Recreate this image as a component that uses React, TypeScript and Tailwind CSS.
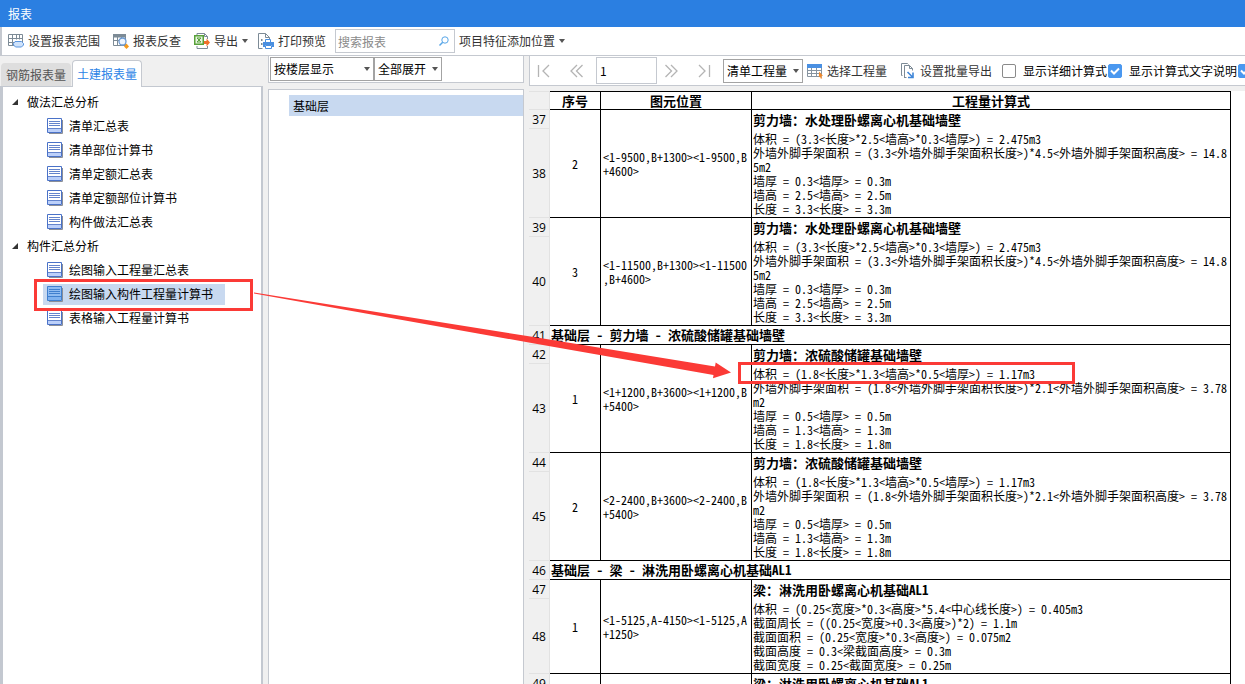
import type { ReactNode } from 'react';

const treeGroups = [
  {
    title: '做法汇总分析',
    items: ['清单汇总表', '清单部位计算书', '清单定额汇总表', '清单定额部位计算书', '构件做法汇总表'],
  },
  {
    title: '构件汇总分析',
    items: ['绘图输入工程量汇总表', '绘图输入构件工程量计算书', '表格输入工程量计算书'],
  },
];

const activeReport = '绘图输入构件工程量计算书';

type Entry = {
  section?: string;
  row: number;
  no: string;
  position: string[];
  title: string;
  lines: string[];
};

const entries: Entry[] = [
  {
    row: 37,
    no: '2',
    position: ['<1-9500,B+1300><1-9500,B', '+4600>'],
    title: '剪力墙：水处理卧螺离心机基础墙壁',
    lines: [
      '体积 = (3.3<长度>*2.5<墙高>*0.3<墙厚>) = 2.475m3',
      '外墙外脚手架面积 = (3.3<外墙外脚手架面积长度>)*4.5<外墙外脚手架面积高度> = 14.8',
      '5m2',
      '墙厚 = 0.3<墙厚> = 0.3m',
      '墙高 = 2.5<墙高> = 2.5m',
      '长度 = 3.3<长度> = 3.3m',
    ],
  },
  {
    row: 39,
    no: '3',
    position: ['<1-11500,B+1300><1-11500', ',B+4600>'],
    title: '剪力墙：水处理卧螺离心机基础墙壁',
    lines: [
      '体积 = (3.3<长度>*2.5<墙高>*0.3<墙厚>) = 2.475m3',
      '外墙外脚手架面积 = (3.3<外墙外脚手架面积长度>)*4.5<外墙外脚手架面积高度> = 14.8',
      '5m2',
      '墙厚 = 0.3<墙厚> = 0.3m',
      '墙高 = 2.5<墙高> = 2.5m',
      '长度 = 3.3<长度> = 3.3m',
    ],
  },
  {
    section: '基础层 - 剪力墙 - 浓硫酸储罐基础墙壁',
    row: 42,
    no: '1',
    position: ['<1+1200,B+3600><1+1200,B', '+5400>'],
    title: '剪力墙：浓硫酸储罐基础墙壁',
    lines: [
      '体积 = (1.8<长度>*1.3<墙高>*0.5<墙厚>) = 1.17m3',
      '外墙外脚手架面积 = (1.8<外墙外脚手架面积长度>)*2.1<外墙外脚手架面积高度> = 3.78',
      'm2',
      '墙厚 = 0.5<墙厚> = 0.5m',
      '墙高 = 1.3<墙高> = 1.3m',
      '长度 = 1.8<长度> = 1.8m',
    ],
  },
  {
    row: 44,
    no: '2',
    position: ['<2-2400,B+3600><2-2400,B', '+5400>'],
    title: '剪力墙：浓硫酸储罐基础墙壁',
    lines: [
      '体积 = (1.8<长度>*1.3<墙高>*0.5<墙厚>) = 1.17m3',
      '外墙外脚手架面积 = (1.8<外墙外脚手架面积长度>)*2.1<外墙外脚手架面积高度> = 3.78',
      'm2',
      '墙厚 = 0.5<墙厚> = 0.5m',
      '墙高 = 1.3<墙高> = 1.3m',
      '长度 = 1.8<长度> = 1.8m',
    ],
  },
  {
    section: '基础层 - 梁 - 淋洗用卧螺离心机基础AL1',
    row: 47,
    no: '1',
    position: ['<1-5125,A-4150><1-5125,A', '+1250>'],
    title: '梁：淋洗用卧螺离心机基础AL1',
    lines: [
      '体积 = (0.25<宽度>*0.3<高度>*5.4<中心线长度>) = 0.405m3',
      '截面周长 = ((0.25<宽度>+0.3<高度>)*2) = 1.1m',
      '截面面积 = (0.25<宽度>*0.3<高度>) = 0.075m2',
      '截面高度 = 0.3<梁截面高度> = 0.3m',
      '截面宽度 = 0.25<截面宽度> = 0.25m',
    ],
  },
  {
    row: 49,
    no: '',
    position: [],
    title: '梁：淋洗用卧螺离心机基础AL1',
    lines: [],
  },
];

function Caret() {
  return (
    <svg className="w-[6px] h-1 shrink-0" viewBox="0 0 6 4">
      <path d="M0 0h6L3 4z" fill="#555" />
    </svg>
  );
}

function RangeIcon() {
  return (
    <svg className="w-4 h-4 shrink-0" viewBox="0 0 16 16" fill="none">
      <path d="M.5 1.5h14v11H.5zM.5 5.5h14M.5 9.5h7M4.5 1.5v11M8.5 1.5v5M11.5 1.5v5" stroke="#7d8b96" />
      <path d="M7 8.500h6.500l2 2v1.500l-2 2H7.500l-2-2v-1.500z" fill="#cfe2fa" stroke="#5b96df" />
    </svg>
  );
}

function TraceIcon() {
  return (
    <svg className="w-4 h-4 shrink-0" viewBox="0 0 16 16" fill="none">
      <path d="M.5 1.500h12v11H.5zM.5 7.500h6M.5 4h12M4.500 4v9M8.500 4v2" stroke="#7d8b96" />
      <path d="M0 1h13v3H0z" fill="#7d8b96" />
      <circle cx="9.500" cy="8.500" r="3.500" fill="#eef5fd" stroke="#6d9bd4" strokeWidth="1.300" />
      <path d="M13.500 10.500L16 13.500l-2.500 2.500L11 13.500z" fill="#f59a1c" />
    </svg>
  );
}

function ExportIcon() {
  return (
    <svg className="w-4 h-4 shrink-0" viewBox="0 0 16 16" fill="none">
      <path d="M3 2V.500h7.500l3 3V6M3 13v2.500h10.500V13" stroke="#7d8b96" />
      <path d="M10.500.5v3h3" stroke="#7d8b96" />
      <rect x=".75" y="2.750" width="8.500" height="8.500" fill="#e6f4e0" stroke="#58a13a" strokeWidth="1.500" />
      <path d="M3 5l4 4M7 5L3 9M3 5h4M3 9h4" stroke="#58a13a" />
      <path d="M10 8h2.500V5.500L16 9.500l-3.500 4V11H10z" fill="#f0702a" />
    </svg>
  );
}

function PrintIcon() {
  return (
    <svg className="w-4 h-4 shrink-0" viewBox="0 0 16 16" fill="none">
      <path d="M4.500 15.500H.5V.500h7l4 4V6M7.500.5v4h4" stroke="#7d8b96" />
      <path d="M3 6h1.500v2H3zM3 10h1.500v2H3z" fill="#7d8b96" />
      <path d="M7.500 6.500h5v3h-5z" fill="#fff" stroke="#4a8fe0" />
      <path d="M5 9h11v5h-2v-2H7v2H5z" fill="#4a8fe0" />
      <path d="M7.500 12.500h6v3h-6z" fill="#fff" stroke="#4a8fe0" />
    </svg>
  );
}

function SelectTableIcon() {
  return (
    <svg className="w-4 h-4 shrink-0" viewBox="0 0 16 16" fill="none">
      <path d="M.5 4.500h14v9H.5zM.5 7.500h14M.5 10.500h14M4.500 4v10M9.500 4v10" stroke="#8794a0" />
      <path d="M0 1h15v4H0z" fill="#4a90e2" />
      <path d="M12 8.500l4 4.200-1.800.3 1 2.300-1.300.5-1-2.300-1 1z" fill="#f08a2c" />
    </svg>
  );
}

function BatchIcon() {
  return (
    <svg className="w-4 h-4 shrink-0" viewBox="0 0 16 16" fill="none">
      <path d="M2.500 12.500h-1V.500h6l1 1M4.500 15V2.500h5l3 3v2M9.500 2.500v3h3M4.500 14.500h2" stroke="#7d8b96" />
      <path d="M7.500 9l5 5M13 9.500v5H8" stroke="#3f86d8" strokeWidth="1.600" />
    </svg>
  );
}

function ReportIcon({ active }: { active?: boolean }) {
  return (
    <svg className="w-4 h-4 shrink-0" viewBox="0 0 16 16" fill="none">
      <path d="M2 15.500h13.500V2" stroke="#8b8f98" />
      <path d="M.5.500h14v14H.5z" fill={active ? '#8fbcf2' : '#fff'} stroke={active ? '#3f7fcf' : '#4a72c8'} />
      <path d="M1 11h13v3H1z" fill={active ? '#7fb2f0' : '#bcd0fa'} />
      <path d="M2 3.500h11M2 5.500h11M2 7.500h11M1 10.500h13" stroke={active ? '#3f7fcf' : '#6484cc'} />
    </svg>
  );
}

function NavButton({ label, d }: { label: string; d: string }) {
  return (
    <button aria-label={label} className="w-7 h-6 flex items-center justify-center">
      <svg className="w-[14px] h-[14px]" viewBox="0 0 14 14" fill="none" stroke="#b4b4b4" strokeWidth="1.300">
        <path d={d} />
      </svg>
    </button>
  );
}

function ToolButton({ icon, children }: { icon?: ReactNode; children: ReactNode }) {
  return (
    <button className="h-6 pl-1 pr-[5px] flex items-center gap-1 text-[#333] whitespace-nowrap shrink-0">
      {icon}
      {children}
    </button>
  );
}

function MenuButton({ icon, children }: { icon?: ReactNode; children: ReactNode }) {
  return (
    <button className="h-6 pr-[2px] flex items-center gap-1 text-[#333] whitespace-nowrap shrink-0">
      {icon}
      {children}
      <Caret />
    </button>
  );
}

function Dropdown({ label, value, width }: { label: string; value: string; width: string }) {
  return (
    <div className={`relative h-6 shrink-0 ${width}`}>
      <select aria-label={label} className="appearance-none w-full h-full pl-[3px] bg-white border border-[#a3a3a3] text-black">
        <option>{value}</option>
      </select>
      <span className="absolute right-1 inset-y-0 flex items-center pointer-events-none">
        <Caret />
      </span>
    </div>
  );
}

function Check({ label, checked }: { label: string; checked?: boolean }) {
  return (
    <label className="flex items-center gap-[7px] whitespace-nowrap shrink-0 text-black">
      <span className="relative w-[14px] h-[14px] shrink-0">
        <input
          type="checkbox"
          defaultChecked={checked}
          className="peer block appearance-none w-[14px] h-[14px] rounded-[2px] border border-[#8a8a8a] bg-white checked:bg-[#4a98f0] checked:border-[#4a98f0]"
        />
        <svg className="absolute inset-0 hidden peer-checked:block pointer-events-none" viewBox="0 0 14 14" fill="none">
          <path d="M3 6.500l3 3L11 4.500" stroke="#fff" strokeWidth="2" />
        </svg>
      </span>
      {label}
    </label>
  );
}

function RowNumber({ children }: { children?: ReactNode }) {
  return (
    <th scope="row" className="pt-[2px] bg-[#f0f0f0] border-b border-r border-[#e2e2e2] font-normal text-center font-['Open_Sans','Noto_Sans_CJK_SC',sans-serif]">
      {children}
    </th>
  );
}

function EntryRows({ entry }: { entry: Entry }) {
  return (
    <>
      {entry.section && (
        <tr className="h-[19px]">
          <RowNumber>{entry.row - 1}</RowNumber>
          <td colSpan={3} className="border-b border-r border-black pl-px text-[13px] leading-[18px] font-bold whitespace-pre">
            {entry.section}
          </td>
        </tr>
      )}
      <tr className="h-[19px]">
        <RowNumber>{entry.row}</RowNumber>
        <td rowSpan={2} className="border-b border-r border-black text-center">
          {entry.no}
        </td>
        <td rowSpan={2} className="border-b border-r border-black pl-[2px] whitespace-pre">
          {entry.position.map((line) => (
            <div key={line}>{line}</div>
          ))}
        </td>
        <td className="border-r border-black pl-px text-[13px] leading-[19px] font-bold whitespace-pre">{entry.title}</td>
      </tr>
      <tr>
        <RowNumber>{entry.row + 1}</RowNumber>
        <td className="border-b border-r border-black pl-px pt-[3px] pb-px whitespace-pre">
          {entry.lines.map((line) => (
            <div key={line}>{line}</div>
          ))}
        </td>
      </tr>
    </>
  );
}

function ReportTable() {
  return (
    <table className="table-fixed border-separate border-spacing-0 w-[702px] text-[12px] leading-[14px] text-black font-['Noto_Sans_Mono_CJK_SC','Noto_Sans_CJK_SC',monospace]">
      <colgroup>
        <col className="w-[21px]" />
        <col className="w-[51px]" />
        <col className="w-[151px]" />
        <col />
      </colgroup>
      <thead>
        <tr className="h-[19px] text-[13px] leading-[17px]">
          <td className="bg-[#f0f0f0] border-b border-r border-t border-[#e2e2e2]" />
          <th className="border-t border-b border-r border-black">序号</th>
          <th className="border-t border-b border-r border-black">图元位置</th>
          <th className="border-t border-b border-r border-black">工程量计算式</th>
        </tr>
      </thead>
      <tbody>
        {entries.map((entry) => (
          <EntryRows key={entry.row} entry={entry} />
        ))}
      </tbody>
    </table>
  );
}

function Annotations() {
  return (
    <div className="absolute inset-0 overflow-hidden pointer-events-none">
      <div className="absolute left-[34px] top-[279px] w-[219px] h-8 border-3 border-[#fb3a36]" />
      <div className="absolute left-[738px] top-[362px] w-[337px] h-[22px] border-3 border-[#fb3a36]" />
      <svg className="absolute left-0 top-0 w-[760px] h-[400px]" viewBox="0 0 760 400">
        <path d="M254 292.500L540 338L715 366.500L715.700 362.500L731 372.500L713 378.300L713.500 375L540 344.500L254 293.500Z" fill="#fb3a36" />
      </svg>
    </div>
  );
}

export default function App() {
  return (
    <div className="relative h-screen flex flex-col overflow-hidden bg-[#f0f0f0] text-[12px] leading-4 font-['Noto_Sans_CJK_SC',sans-serif]">
      <header className="h-[27px] shrink-0 px-2 flex items-center bg-[#2b7fe1] text-white">报表</header>

      <div className="h-[29px] shrink-0 pl-[2px] flex items-center gap-1 bg-white border-b border-l-2 border-[#c5c9d0]">
        <ToolButton icon={<RangeIcon />}>设置报表范围</ToolButton>
        <ToolButton icon={<TraceIcon />}>报表反查</ToolButton>
        <div className="pl-1">
          <MenuButton icon={<ExportIcon />}>导出</MenuButton>
        </div>
        <ToolButton icon={<PrintIcon />}>打印预览</ToolButton>
        <div className="relative w-[120px] shrink-0">
          <input
            aria-label="搜索报表"
            placeholder="搜索报表"
            className="w-full h-6 pl-[2px] border border-[#c5c9d0] bg-white placeholder:text-[#8a8a8a]"
          />
          <svg className="absolute right-1 top-[6px] w-[14px] h-3" viewBox="0 0 14 12" fill="none" stroke="#58a6e8">
            <circle cx="8" cy="5" r="3.200" />
            <path d="M5.700 7.300L2.500 10.500" strokeWidth="1.500" />
          </svg>
        </div>
        <MenuButton>项目特征添加位置</MenuButton>
      </div>

      <main className="flex-1 min-h-0 flex gap-[5px]">
        <aside className="w-[263px] shrink-0 flex flex-col">
          <div className="h-[30px] pl-px flex items-end shrink-0">
            <button className="h-[23px] px-[5px] rounded-t-sm bg-[#dedede] text-[#555]">钢筋报表量</button>
            <button className="relative z-10 -mb-px h-[27px] px-1 ml-px rounded-t-sm bg-white border border-b-0 border-[#c5c9d0] text-[#2b83e6]">
              土建报表量
            </button>
          </div>
          <nav className="flex-1 bg-white border-t border-l-3 border-r-2 border-[#c3c8d0] pt-[3px]">
            {treeGroups.map((group) => (
              <section key={group.title}>
                <h2 className="h-6 pl-[9px] flex items-center gap-[9px]">
                  <svg className="w-[6px] h-[6px]" viewBox="0 0 6 6">
                    <path d="M6 0v6H0z" fill="#333" />
                  </svg>
                  {group.title}
                </h2>
                <ul>
                  {group.items.map((item) => (
                    <li key={item} className="h-6 pl-10 flex items-center">
                      <button
                        className={`h-[21px] pl-1 pr-3 flex items-center gap-[6px] ${item === activeReport ? 'bg-[#c8d9f0]' : ''}`}
                      >
                        <ReportIcon active={item === activeReport} />
                        {item}
                      </button>
                    </li>
                  ))}
                </ul>
              </section>
            ))}
          </nav>
        </aside>

        <section className="w-[256px] shrink-0 flex flex-col gap-[6px]">
          <div className="h-[27px] pl-px flex items-center bg-white border border-t-0 border-[#c5c9d0]">
            <Dropdown label="显示方式" value="按楼层显示" width="w-[104px]" />
            <Dropdown label="展开方式" value="全部展开" width="w-[68px]" />
          </div>
          <ul className="flex-1 pt-[5px] bg-white border border-b-0 border-[#c5c9d0]">
            <li className="h-[21px] ml-5 pl-1 flex items-center bg-[#c8d9f0]">基础层</li>
          </ul>
        </section>

        <section className="flex-1 min-w-0 flex flex-col">
          <div className="h-[30px] shrink-0 flex items-center gap-[5px] overflow-hidden bg-white border-l border-b border-[#c5c9d0]">
            <div className="flex items-center">
              <div className="flex items-center gap-[5px]">
                <NavButton label="首页" d="M1.500 1v12M12 1L6 7l6 6" />
                <NavButton label="上一页" d="M7 1L1 7l6 6M12.500 1l-6 6 6 6" />
                <input aria-label="页码" defaultValue="1" className="w-[61px] h-[27px] pl-[3px] border border-[#c5c9d0] bg-white" />
              </div>
              <div className="flex items-center gap-[5px]">
                <NavButton label="下一页" d="M1.500 1l6 6-6 6M7 1l6 6-6 6" />
                <NavButton label="末页" d="M2 1l6 6-6 6M12.500 1v12" />
              </div>
            </div>
            <div className="flex items-center">
              <Dropdown label="工程量类型" value="清单工程量" width="w-20" />
              <ToolButton icon={<SelectTableIcon />}>选择工程量</ToolButton>
              <div className="pl-1">
                <ToolButton icon={<BatchIcon />}>设置批量导出</ToolButton>
              </div>
            </div>
            <div className="flex items-center gap-px">
              <Check label="显示详细计算式" />
              <Check label="显示计算式文字说明" checked />
              <Check label="显示房间" checked />
            </div>
          </div>
          <div className="mt-[5px] flex-1 min-h-0 overflow-hidden bg-white">
            <ReportTable />
          </div>
        </section>
      </main>

      <Annotations />
    </div>
  );
}
